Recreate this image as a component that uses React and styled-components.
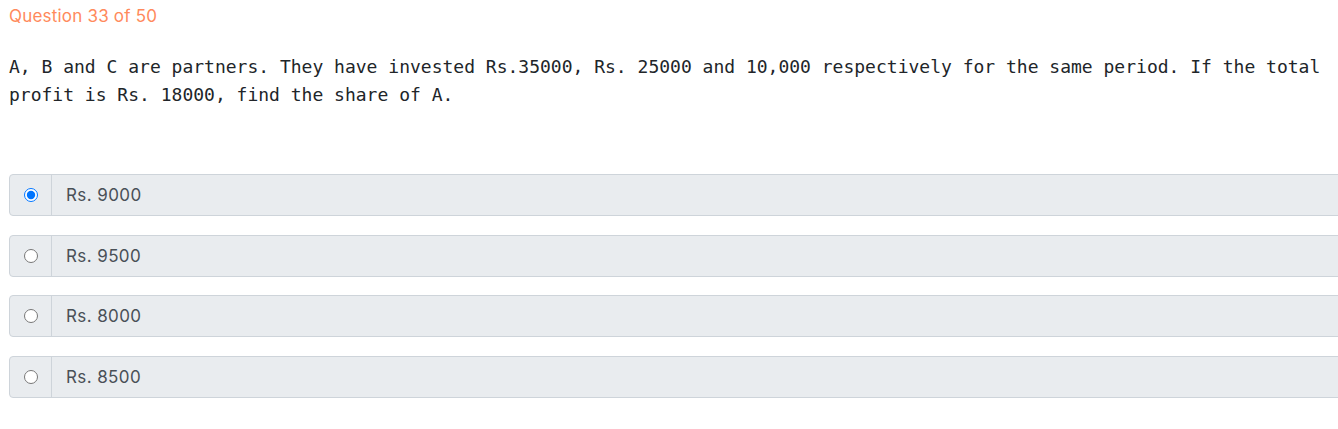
import React from "react";
import styled, { createGlobalStyle } from "styled-components";

const Global = createGlobalStyle`
  html, body { margin: 0; padding: 0; background: #fff; overflow: hidden; }
  body { font-family: Inter, "Open Sans", sans-serif; }
`;

const Page = styled.div`
  padding: 6px 0 0 9px;
  width: 1360px;
  box-sizing: border-box;
`;

const Counter = styled.div`
  color: #ff8a5c;
  font-size: 17px;
  letter-spacing: 0.2px;
  line-height: 20px;
  font-family: Inter, sans-serif;
`;

const QuestionText = styled.p`
  margin: 27px 0 0 0;
  width: 1325px;
  font-family: "DejaVu Sans Mono", "Liberation Mono", monospace;
  font-size: 18px;
  line-height: 28px;
  color: #212529;
`;

const Options = styled.div`
  margin-top: 65px;
  display: flex;
  flex-direction: column;
  gap: 18.7px;
`;

const Option = styled.label`
  display: flex;
  height: 42px;
  box-sizing: border-box;
  border: 1px solid #ced4da;
  border-radius: 4px;
  background: #e9ecef;
  align-items: stretch;
`;

const RadioCell = styled.div`
  width: 41px;
  display: flex;
  align-items: center;
  justify-content: center;
  border-right: 1px solid #ced4da;
  flex-shrink: 0;
  input { margin: 0 0 0 1px; width: 14px; height: 14px; }
`;

const Label = styled.div`
  display: flex;
  align-items: center;
  padding-left: 14px;
  font-size: 17px;
  letter-spacing: 0.4px;
  color: #495057;
`;

const options = ["Rs. 9000", "Rs. 9500", "Rs. 8000", "Rs. 8500"];

export default function App() {
  return (
    <>
      <Global />
      <Page>
        <Counter>Question 33 of 50</Counter>
        <QuestionText>
          A, B and C are partners. They have invested Rs.35000, Rs. 25000 and
          10,000 respectively for the same period. If the total profit is Rs.
          18000, find the share of A.
        </QuestionText>
        <Options>
          {options.map((o, i) => (
            <Option key={o}>
              <RadioCell>
                <input type="radio" name="q" defaultChecked={i === 0} />
              </RadioCell>
              <Label>{o}</Label>
            </Option>
          ))}
        </Options>
      </Page>
    </>
  );
}
